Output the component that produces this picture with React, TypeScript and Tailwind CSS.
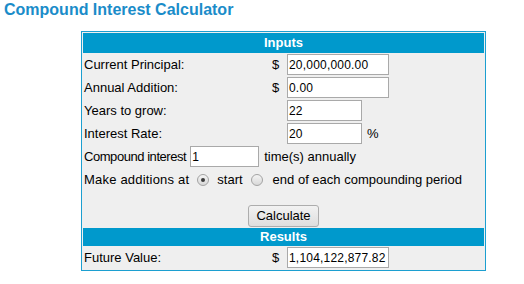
function Radio({ checked }: { checked?: boolean }) {
  return (
    <span className="inline-flex h-[12px] w-[12px] items-center justify-center rounded-full border border-[#a3a3a3] bg-gradient-to-b from-[#f4f4f4] to-[#d8d8d8]">
      {checked && <span className="h-[4px] w-[4px] rounded-full bg-[#3a3a3a]" />}
    </span>
  )
}

function Field({ value, width }: { value: string; width: string }) {
  return (
    <div className={`flex h-[21px] items-center border border-[#a9a9a9] bg-white pl-[1px] text-[12px] tracking-[0.2px] ${width}`}>
      {value}
    </div>
  )
}

function Row({ label, dollar, value, width, suffix }: { label: string; dollar?: boolean; value: string; width: string; suffix?: string }) {
  return (
    <div className="flex h-[23px] items-center">
      <span className="w-[188px] pl-px">{label}</span>
      <span className="w-[16px] pl-px">{dollar ? '$' : ''}</span>
      <Field value={value} width={width} />
      {suffix && <span className="ml-[5px]">{suffix}</span>}
    </div>
  )
}

export default function App() {
  return (
    <div className="min-h-[284px] w-[524px] bg-white font-['Liberation_Sans',Arial,sans-serif] text-[13px] text-black">
      <h1 className="pl-1 pt-px text-[16px] font-bold leading-[18px] text-[#1a8cc9]">
        Compound Interest Calculator
      </h1>

      <div className="ml-[81px] mt-3 w-[405px] border border-[#1c9fd0] bg-[#efefef] p-px">
        <div className="flex h-[20px] items-center justify-center bg-[#0099cc] font-bold text-white">Inputs</div>

        <Row label="Current Principal:" dollar value="20,000,000.00" width="w-[102px]" />
        <Row label="Annual Addition:" dollar value="0.00" width="w-[102px]" />
        <Row label="Years to grow:" value="22" width="w-[75px]" />
        <Row label="Interest Rate:" value="20" width="w-[75px]" suffix="%" />

        <div className="flex h-[23px] items-center pl-px">
          <span className="tracking-[-0.45px]">Compound interest</span>
          <div className="ml-[4px]">
            <Field value="1" width="w-[69px]" />
          </div>
          <span className="ml-[5px]">time(s) annually</span>
        </div>

        <div className="flex h-[23px] items-center pl-px">
          <span className="tracking-[0.2px]">Make additions at</span>
          <span className="ml-[8px] mr-[8px] flex">
            <Radio checked />
          </span>
          <span>start</span>
          <span className="ml-[8px] mr-[10px] flex">
            <Radio />
          </span>
          <span>end of each compounding period</span>
        </div>

        <div className="flex h-[37px] items-end justify-center pb-px">
          <button className="h-[22px] w-[71px] rounded-[3px] border border-[#adadad] bg-gradient-to-b from-[#f2f2f2] to-[#dedede] text-[13px]">
            Calculate
          </button>
        </div>

        <div className="flex h-[18px] items-center justify-center bg-[#0099cc] font-bold text-white">Results</div>

        <Row label="Future Value:" dollar value="1,104,122,877.82" width="w-[102px]" />
      </div>
    </div>
  )
}
